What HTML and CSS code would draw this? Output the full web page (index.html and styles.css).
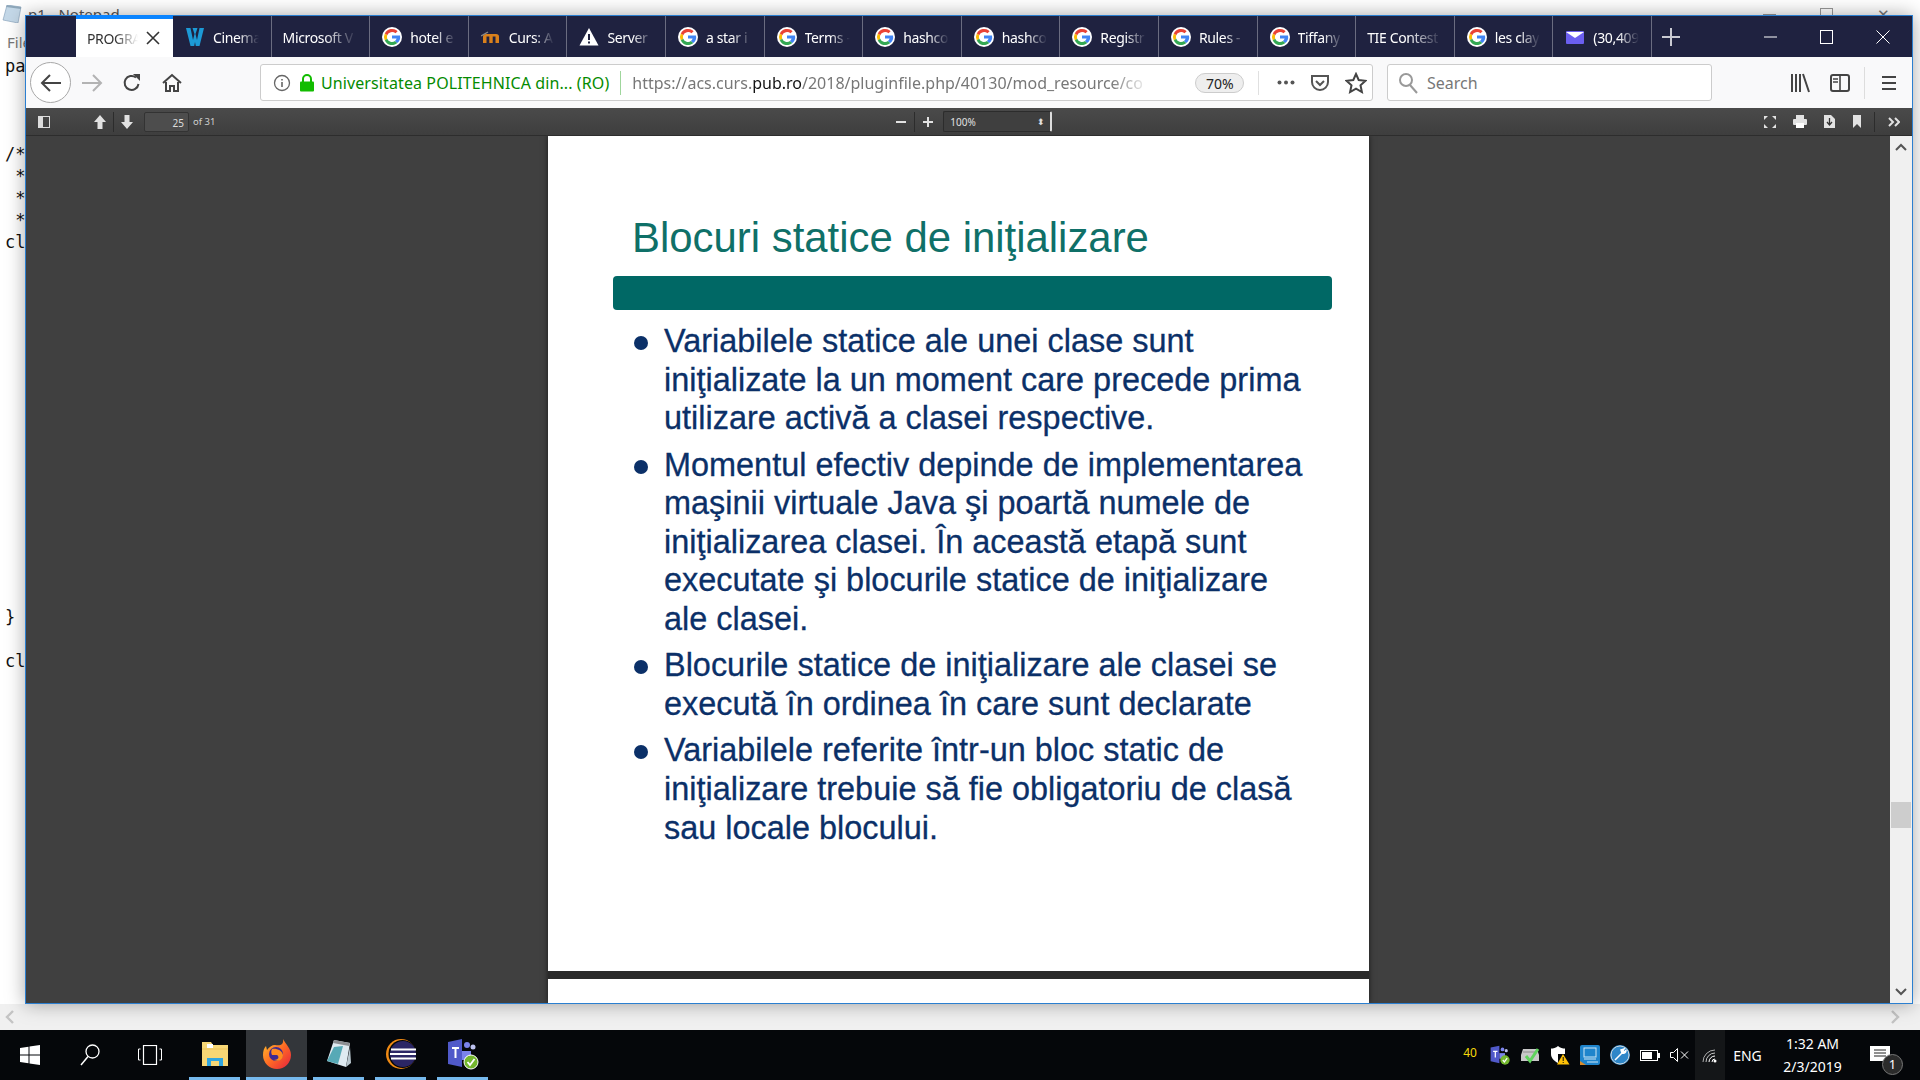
FILE: index.html
```html
<!DOCTYPE html>
<html lang="en">
<head>
  <meta charset="UTF-8" />
  <meta name="viewport" content="width=device-width, initial-scale=1.0" />
  <title>Blocuri statice de inițializare</title>
  <link rel="stylesheet" href="styles.css">
</head>
<body>
  <svg class="defs" width="0" height="0">
    <symbol id="g" viewBox="0 0 20 20">
      <circle cx="10" cy="10" r="10" fill="#fff"/>
      <path d="M5.2 8.3A5.2 5.2 0 0 1 13.5 6.3L15.6 4.2A8 8 0 0 0 2.8 6.4Z" fill="#ea4335"/>
      <path d="M2.8 6.4A8 8 0 0 0 2.8 13.6L5.2 11.7A5.2 5.2 0 0 1 5.2 8.3Z" fill="#fbbc05"/>
      <path d="M2.8 13.6A8 8 0 0 0 15.4 16L13 13.9A5.2 5.2 0 0 1 5.2 11.7Z" fill="#34a853"/>
      <path d="M18 8.4H10V11.6H14.6A4 4 0 0 1 13 13.9L15.4 16A8 8 0 0 0 18 8.4Z" fill="#4285f4"/>
    </symbol>
  </svg>

  <!-- notepad behind the browser -->
  <div class="notepad">
    <div class="np-title">
      <svg class="np-icon" width="20" height="18" viewBox="0 0 20 18"><path d="M5 0L19 2L16 18L1 15Z" fill="#c4d8e8" stroke="#7d9bb5" stroke-width=".6"/><path d="M5 0L19 2V4L4 2Z" fill="#8fa8bb"/></svg>
      <span>p1 - Notepad</span>
    </div>
    <div class="np-menu">File</div>
    <pre class="np-text">pa



/*
 *
 *
 *
cl
















}

cl</pre>
    <div class="np-controls"><span class="np-min"></span><span class="np-max"></span><span class="np-close">✕</span></div>
    <div class="np-hscroll">
      <svg width="10" height="14" viewBox="0 0 10 14"><path d="M8 1L2 7L8 13" fill="none" stroke="#c4c4c4" stroke-width="2.4"/></svg>
      <svg width="10" height="14" viewBox="0 0 10 14"><path d="M2 1L8 7L2 13" fill="none" stroke="#c4c4c4" stroke-width="2.4"/></svg>
    </div>
  </div>

  <div class="browser">
    <div class="tabbar">
      <div class="tab active"><span class="tab-text">PROGRA</span>
        <svg class="tab-x" width="14" height="14" viewBox="0 0 14 14"><path d="M1 1L13 13M13 1L1 13" stroke="#333" stroke-width="1.6"/></svg>
      </div>
      <div class="tab"><svg class="fav" viewBox="0 0 20 20"><path d="M1 1H5.500L8 13L9.500 7L7.500 1H12.500L10.500 7L12 13L14.500 1H19L14.500 19H10.800L10 15L9.200 19H5.500Z" fill="#1c9ad6"/></svg><span class="tab-text">Cinema</span></div>
      <div class="tab plain"><span class="tab-text">Microsoft V</span></div>
      <div class="tab"><svg class="fav"><use href="#g"/></svg><span class="tab-text">hotel e</span></div>
      <div class="tab"><svg class="fav" viewBox="0 0 20 20"><path d="M2 16V9.500Q2 7 5 7H15Q18 7 18 9.500V16H14.500V9.500H11.700V16H8.300V9.500H5.500V16Z" fill="#d9801c"/><path d="M0 9L7 5" stroke="#8a8a8a" stroke-width="1.400"/></svg><span class="tab-text">Curs: A</span></div>
      <div class="tab"><svg class="fav" viewBox="0 0 20 20"><path d="M10 1L19.500 18.500H.5Z" fill="#fff"/><path d="M9 7H11V13H9ZM9 14.500H11V16.500H9Z" fill="#1f2240"/></svg><span class="tab-text">Server</span></div>
      <div class="tab"><svg class="fav"><use href="#g"/></svg><span class="tab-text">a star i</span></div>
      <div class="tab"><svg class="fav"><use href="#g"/></svg><span class="tab-text">Terms -</span></div>
      <div class="tab"><svg class="fav"><use href="#g"/></svg><span class="tab-text">hashco</span></div>
      <div class="tab"><svg class="fav"><use href="#g"/></svg><span class="tab-text">hashco</span></div>
      <div class="tab"><svg class="fav"><use href="#g"/></svg><span class="tab-text">Registr</span></div>
      <div class="tab"><svg class="fav"><use href="#g"/></svg><span class="tab-text">Rules -</span></div>
      <div class="tab"><svg class="fav"><use href="#g"/></svg><span class="tab-text">Tiffany</span></div>
      <div class="tab plain"><span class="tab-text">TIE Contest</span></div>
      <div class="tab"><svg class="fav"><use href="#g"/></svg><span class="tab-text">les clay</span></div>
      <div class="tab"><svg class="fav" viewBox="0 0 20 20"><rect x="1" y="4" width="18" height="13" rx="1" fill="#6b5ff0"/><path d="M1 5L10 11L19 5" fill="#fff"/></svg><span class="tab-text">(30,409</span></div>
      <svg class="newtab" width="18" height="18" viewBox="0 0 18 18"><path d="M9 0V18M0 9H18" stroke="#c9cad2" stroke-width="2"/></svg>
      <div class="winctl">
        <svg width="14" height="14" viewBox="0 0 14 14"><path d="M0 7H13" stroke="#fff"/></svg>
        <svg width="14" height="14" viewBox="0 0 14 14"><rect x=".5" y=".5" width="12" height="13" fill="none" stroke="#fff"/></svg>
        <svg width="14" height="14" viewBox="0 0 14 14"><path d="M.5 .5L13.500 13.500M13.500 .5L.5 13.500" stroke="#fff"/></svg>
      </div>
    </div>

    <div class="navbar">
      <button class="nav-back"><svg width="22" height="20" viewBox="0 0 22 20"><path d="M10 2L2 10L10 18M2 10H21" fill="none" stroke="#444" stroke-width="2"/></svg></button>
      <button class="nav-btn"><svg width="22" height="20" viewBox="0 0 22 20"><path d="M12 2L20 10L12 18M20 10H1" fill="none" stroke="#b3b3b3" stroke-width="2"/></svg></button>
      <button class="nav-btn"><svg width="20" height="20" viewBox="0 0 20 20"><path d="M16.500 11A7 7 0 1 1 14 4.500" fill="none" stroke="#444" stroke-width="2"/><path d="M11 1H18V8Z" fill="#444"/></svg></button>
      <button class="nav-btn"><svg width="20" height="20" viewBox="0 0 20 20"><path d="M1 10L10 2L19 10M4 9V18H8V13H12V18H16V9" fill="none" stroke="#444" stroke-width="2"/></svg></button>

      <div class="urlbar">
        <svg class="url-info" width="18" height="18" viewBox="0 0 18 18"><circle cx="9" cy="9" r="7.500" fill="none" stroke="#666" stroke-width="1.300"/><path d="M9 8V13M9 5V6.500" stroke="#666" stroke-width="1.600"/></svg>
        <svg class="url-lock" width="16" height="18" viewBox="0 0 16 18"><path d="M4 8V5A4 4 0 0 1 12 5V8" fill="none" stroke="#12bc00" stroke-width="2"/><rect x="1" y="7.500" width="14" height="10" rx="1" fill="#12bc00"/></svg>
        <span class="url-org">Universitatea POLITEHNICA din... (RO)</span>
        <span class="url-sep"></span>
        <span class="url-text">https://acs.curs.<b>pub.ro</b>/2018/pluginfile.php/40130/mod_resource/co</span>
        <span class="url-zoom">70%</span>
        <span class="url-sep light"></span>
        <svg class="url-dots" width="18" height="5" viewBox="0 0 18 5"><circle cx="2.500" cy="2.500" r="2" fill="#555"/><circle cx="9" cy="2.500" r="2" fill="#555"/><circle cx="15.500" cy="2.500" r="2" fill="#555"/></svg>
        <svg class="url-icon" width="20" height="20" viewBox="0 0 20 20"><path d="M2 3H18V9A8 8 0 0 1 2 9Z" fill="none" stroke="#555" stroke-width="2"/><path d="M6 8L10 12L14 8" fill="none" stroke="#555" stroke-width="2"/></svg>
        <svg class="url-icon" width="22" height="22" viewBox="0 0 22 22"><path d="M11 2L13.700 8L20.500 8.800L15.500 13.300L16.900 20L11 16.600L5.100 20L6.500 13.300L1.500 8.800L8.300 8Z" fill="none" stroke="#444" stroke-width="2"/></svg>
      </div>

      <div class="searchbar">
        <svg width="20" height="22" viewBox="0 0 20 22"><circle cx="8" cy="8" r="6" fill="none" stroke="#999" stroke-width="2"/><path d="M12 13L19 21" stroke="#999" stroke-width="2"/></svg>
        <span>Search</span>
      </div>

      <div class="nav-right">
        <button class="nav-btn"><svg width="20" height="20" viewBox="0 0 20 20"><path d="M2 1V19M6 1V19M10 1V19M13 1L19 19" stroke="#444" stroke-width="2"/></svg></button>
        <button class="nav-btn"><svg width="20" height="20" viewBox="0 0 20 20"><rect x="1" y="2" width="18" height="16" rx="2" fill="none" stroke="#444" stroke-width="2"/><path d="M10 2V18M3 6H8M3 9H8" stroke="#444" stroke-width="1.600"/></svg></button>
        <span class="nav-sep"></span>
        <button class="nav-btn"><svg width="18" height="18" viewBox="0 0 18 18"><path d="M2 3H16M2 9H16M2 15H16" stroke="#444" stroke-width="2"/></svg></button>
      </div>
    </div>

    <div class="pdfbar">
      <svg class="pdf-sidebar" width="12" height="12" viewBox="0 0 12 12"><rect x=".5" y=".5" width="11" height="11" fill="none" stroke="#ddd"/><rect x="1" y="1" width="4" height="10" fill="#ddd"/></svg>
      <svg class="pdf-up" width="12" height="14" viewBox="0 0 12 14"><path d="M6 0L12 7H8.500V14H3.500V7H0Z" fill="#e2e2e2"/></svg>
      <span class="pdf-sep"></span>
      <svg width="12" height="14" viewBox="0 0 12 14"><path d="M6 14L12 7H8.500V0H3.500V7H0Z" fill="#e2e2e2"/></svg>
      <span class="pdf-page">25</span>
      <span class="pdf-of">of 31</span>
      <div class="pdf-zoom">
        <svg width="10" height="10" viewBox="0 0 10 10"><path d="M0 5H10" stroke="#e2e2e2" stroke-width="2"/></svg>
        <span class="pdf-sep"></span>
        <svg width="10" height="10" viewBox="0 0 10 10"><path d="M0 5H10M5 0V10" stroke="#e2e2e2" stroke-width="2"/></svg>
        <span class="pdf-select">100%<i>⬍</i></span>
      </div>
      <div class="pdf-right">
        <svg width="12" height="12" viewBox="0 0 12 12"><path d="M0 0H4L0 4ZM12 0V4L8 0ZM0 12V8L4 12ZM12 12H8L12 8Z" fill="#e2e2e2"/></svg>
        <svg width="14" height="13" viewBox="0 0 14 13"><rect x="3" y="0" width="8" height="4" fill="#e2e2e2"/><rect x="0" y="4" width="14" height="6" rx="1" fill="#e2e2e2"/><rect x="3" y="8" width="8" height="5" fill="#fff"/></svg>
        <svg width="11" height="13" viewBox="0 0 11 13"><path d="M0 0H7L11 4V13H0Z" fill="#e2e2e2"/><path d="M5.500 3V9M3 7L5.500 10L8 7" fill="none" stroke="#333" stroke-width="1.300"/></svg>
        <svg width="10" height="13" viewBox="0 0 10 13"><path d="M1 0H9V13L5 9L1 13Z" fill="#e2e2e2"/></svg>
        <span class="pdf-sep"></span>
        <svg width="12" height="10" viewBox="0 0 12 10"><path d="M1 1L5 5L1 9M7 1L11 5L7 9" fill="none" stroke="#e2e2e2" stroke-width="2"/></svg>
      </div>
    </div>

    <div class="viewer">
      <div class="doc">
        <div class="page">
          <h1 class="slide-title">Blocuri statice de iniţializare</h1>
          <div class="slide-bar"></div>
          <ul class="slide-list">
            <li>Variabilele statice ale unei clase sunt<br>iniţializate la un moment care precede prima<br>utilizare activă a clasei respective.</li>
            <li>Momentul efectiv depinde de implementarea<br>maşinii virtuale Java şi poartă numele de<br>iniţializarea clasei. În această etapă sunt<br>executate şi blocurile statice de iniţializare<br>ale clasei.</li>
            <li>Blocurile statice de iniţializare ale clasei se<br>execută în ordinea în care sunt declarate</li>
            <li>Variabilele referite într-un bloc static de<br>iniţializare trebuie să fie obligatoriu de clasă<br>sau locale blocului.</li>
          </ul>
        </div>
        <div class="page"></div>
      </div>
      <div class="vscroll">
        <svg width="12" height="8" viewBox="0 0 12 8"><path d="M1 7L6 2L11 7" fill="none" stroke="#555" stroke-width="2"/></svg>
        <span class="vthumb"></span>
        <svg width="12" height="8" viewBox="0 0 12 8"><path d="M1 1L6 6L11 1" fill="none" stroke="#555" stroke-width="2"/></svg>
      </div>
    </div>
  </div>

  <div class="taskbar">
    <div class="task-btn"><svg width="20" height="20" viewBox="0 0 20 20"><path d="M0 3L8.500 1.800V9.500H0ZM9.500 1.600L20 0V9.500H9.500ZM0 10.500H8.500V18.200L0 17ZM9.500 10.500H20V20L9.500 18.400Z" fill="#fff"/></svg></div>
    <div class="task-btn"><svg width="20" height="22" viewBox="0 0 20 22"><circle cx="12.500" cy="7.500" r="6.500" fill="none" stroke="#fff" stroke-width="1.300"/><path d="M8 12.500L1 21" stroke="#fff" stroke-width="1.500"/></svg></div>
    <div class="task-btn"><svg width="24" height="20" viewBox="0 0 24 20"><rect x="5.500" y=".5" width="13" height="19" fill="none" stroke="#fff" stroke-width="1.200"/><path d="M2.500 4H.5V15H2.500M21.500 4H23.500V15H21.500" fill="none" stroke="#fff"/></svg></div>
    <div class="task-apps">
      <div class="task-app"><svg width="28" height="26" viewBox="0 0 28 26"><path d="M1 1H10L12 4H27V25H1Z" fill="#f8d775"/><path d="M1 8H27" stroke="#eec25b"/><path d="M6 3H12V7H6Z" fill="#fff"/><path d="M6 25V17H22V25H18V20H10V25Z" fill="#31a6e0"/></svg></div>
      <div class="task-app on"><svg width="28" height="30" viewBox="0 0 28 30"><defs><linearGradient id="fx" x1="0" y1="0" x2="1" y2="1"><stop offset="0" stop-color="#ffc62e"/><stop offset=".5" stop-color="#ff6a24"/><stop offset="1" stop-color="#e3203f"/></linearGradient></defs><path d="M20 0C23 6 28 9 28 16A14 14 0 0 1 0 16C0 12 1 9 3 7L4 11C6 8 9 6 12 6C17 7 21 6 20 0Z" fill="url(#fx)"/><circle cx="13" cy="15" r="7" fill="#3f2a91"/><path d="M9 10C13 9 19 11 20 16C20 21 15 23 11 21C15 21 17 18 14 16H9C8 14 8 12 9 10Z" fill="#ff8b20"/></svg></div>
      <div class="task-app"><svg width="26" height="30" viewBox="0 0 26 30"><path d="M8 1L24 4L20 28L1 22Z" fill="#dfeaf1"/><path d="M8 8L1 22L12 25L17 7Z" fill="#57a9b6"/><path d="M8 1L24 4L23 7L7 4Z" fill="#8d8f93"/><path d="M20 28L24 8L25 24Z" fill="#b9c7cf"/></svg></div>
      <div class="task-app"><svg width="30" height="30" viewBox="0 0 30 30"><circle cx="15" cy="15" r="15" fill="#f08a14"/><circle cx="16.500" cy="15" r="14" fill="#05070a"/><circle cx="17" cy="15" r="13" fill="#2b2665"/><path d="M5 10.500H30M4 15H30M5 19.500H30" stroke="#fff" stroke-width="2"/></svg></div>
      <div class="task-app"><svg width="32" height="32" viewBox="0 0 32 32"><path d="M1 4L15 1V29L1 26Z" fill="#5059c9"/><path d="M5 9H12V11H9.500V20H7.500V11H5Z" fill="#fff"/><circle cx="20" cy="7" r="3" fill="#7b83eb"/><circle cx="26" cy="9" r="2.500" fill="#bec2f0"/><rect x="15" y="13" width="9" height="9" fill="#7b83eb"/><circle cx="24" cy="24" r="7" fill="#74b72e" stroke="#fff"/><path d="M20.500 24L23 27L27.500 21" fill="none" stroke="#fff" stroke-width="1.800"/></svg></div>
    </div>

    <div class="tray">
      <span class="tray-item tray-num">40</span>
      <span class="tray-item"><svg width="20" height="20" viewBox="0 0 32 32"><path d="M1 4L15 1V29L1 26Z" fill="#5059c9"/><path d="M5 9H12V11H9.500V20H7.500V11H5Z" fill="#fff"/><circle cx="20" cy="7" r="3" fill="#7b83eb"/><circle cx="26" cy="9" r="2.500" fill="#bec2f0"/><rect x="15" y="13" width="9" height="9" fill="#7b83eb"/><circle cx="24" cy="24" r="7.500" fill="#74b72e"/><path d="M20.500 24L23 27L27.500 21" fill="none" stroke="#fff" stroke-width="2"/></svg></span>
      <span class="tray-item"><svg width="20" height="18" viewBox="0 0 20 18"><path d="M3 3H17L19 9V15H1V9Z" fill="#c8c8c8"/><path d="M3 6H17" stroke="#8a8a8a"/><path d="M6 10L10 15L18 3" fill="none" stroke="#5fd35c" stroke-width="3"/></svg></span>
      <span class="tray-item"><svg width="20" height="20" viewBox="0 0 20 20"><path d="M8 1C6 3 3 3.500 1 3.500V9C1 13 4 16 8 18Z" fill="#fff"/><path d="M8 1C10 3 13 3.500 15 3.500V9H8Z" fill="#fff"/><path d="M13 9L19.500 19.500H7Z" fill="#ffc107"/><path d="M12.700 12H13.700V16H12.700ZM12.700 17H13.700V18H12.700Z" fill="#111"/></svg></span>
      <span class="tray-item"><svg width="20" height="20" viewBox="0 0 20 20"><rect width="20" height="20" rx="2" fill="#1f84cc"/><rect x="4" y="3" width="12" height="9" fill="none" stroke="#cfe6f5"/><path d="M4 14H16M7 17H18" stroke="#cfe6f5"/><path d="M0 16L6 20H0Z" fill="#d98b2b"/></svg></span>
      <span class="tray-item"><svg width="20" height="20" viewBox="0 0 20 20"><circle cx="10" cy="10" r="10" fill="#2e86c8"/><circle cx="10" cy="10" r="9" fill="none" stroke="#cfd7dd"/><path d="M5 15L12 8M12 8L11 5L14 4L13 6L15 7L16 5Q16 9 12 8" fill="#fff" stroke="#fff" stroke-width="1.500"/></svg></span>
      <span class="tray-item"><svg width="20" height="11" viewBox="0 0 20 11"><rect x=".5" y=".5" width="17" height="10" fill="none" stroke="#fff"/><rect x="2" y="2" width="10" height="7" fill="#fff"/><rect x="18" y="3" width="2" height="5" fill="#fff"/></svg></span>
      <span class="tray-item"><svg width="20" height="14" viewBox="0 0 20 14"><path d="M.5 4.500H3.500L7.500 .5V13.500L3.500 9.500H.5Z" fill="none" stroke="#fff"/><path d="M11 3.500L18 10.500M18 3.500L11 10.500" stroke="#fff"/></svg></span>
      <span class="tray-item tray-wifi"><svg width="16" height="16" viewBox="0 0 16 16"><circle cx="13" cy="14" r="1.500" fill="#fff"/><g fill="none" stroke="#fff"><path d="M1 15A12 12 0 0 1 13 3" opacity=".65"/><path d="M4 15A9 9 0 0 1 13 6" opacity=".75"/><path d="M7 15A6 6 0 0 1 13 9"/><path d="M10 15A3 3 0 0 1 13 12"/></g></svg></span>
      <span class="tray-lang">ENG</span>
      <div class="tray-clock"><span>1:32 AM</span><span>2/3/2019</span></div>
      <div class="tray-notif">
        <svg width="20" height="18" viewBox="0 0 20 18"><path d="M0 0H20V15H0Z" fill="#fff"/><path d="M4 4H16M4 7H16M4 10H16" stroke="#222"/></svg>
        <span class="notif-badge">1</span>
      </div>
    </div>
  </div>
</body>
</html>
```

FILE: styles.css
```css
* {
  box-sizing: border-box;
  padding: 0;
  margin: 0;
}

html, body {
  width: 1920px;
  height: 1080px;
  overflow: hidden;
}

body {
  position: relative;
  background: #fff;
  font-family: "Noto Sans", sans-serif;
  color: #222;
}

.defs {
  position: absolute;
}

button {
  border: none;
  background: transparent;
  display: flex;
  align-items: center;
  justify-content: center;
}

/* notepad */
.notepad {
  position: absolute;
  left: 0;
  top: 0;
  width: 1920px;
  height: 1030px;
  background: #fff;
  overflow: hidden;
}

.np-title {
  display: flex;
  align-items: flex-start;
  gap: 6px;
  height: 32px;
  padding-top: 5px;
  font-size: 15px;
  line-height: 18px;
  color: #555;
}

.np-icon {
  margin-left: 2px;
}

.np-menu {
  padding-left: 7px;
  font-size: 15px;
  color: #777;
  height: 23px;
}

.np-text {
  padding-left: 5px;
  font-family: "DejaVu Sans Mono", monospace;
  font-size: 17px;
  line-height: 22.05px;
  color: #111;
}

.np-controls {
  position: absolute;
  top: 4px;
  left: 1763px;
  display: flex;
  align-items: center;
  gap: 44px;
  color: #777;
  font-size: 15px;
}

.np-min {
  width: 13px;
  border-top: 1px solid #999;
}

.np-max {
  width: 13px;
  height: 12px;
  border: 1px solid #999;
}

.np-hscroll {
  position: absolute;
  left: 0;
  right: 0;
  bottom: 0;
  height: 26px;
  padding: 0 20px 0 5px;
  display: flex;
  align-items: center;
  justify-content: space-between;
  background: #f0f0f0;
}

/* browser window */
.browser {
  position: absolute;
  left: 25px;
  top: 15px;
  width: 1888px;
  height: 989px;
  display: flex;
  flex-direction: column;
  border: 1px solid #2b7fd0;
  box-shadow: 0 0 18px rgba(0, 0, 0, 0.35);
}

.tabbar {
  display: flex;
  height: 41px;
  padding-left: 50px;
  background: #1f2240;
  flex-shrink: 0;
}

.tab {
  display: flex;
  align-items: center;
  width: 98.6px;
  padding: 1px 12px 0 12px;
  gap: 8px;
  border-right: 1px solid #6a6c80;
  color: #fff;
  font-size: 14px;
  letter-spacing: -0.35px;
}

.tab.plain {
  padding-left: 11px;
}

.tab.active {
  width: 97px;
  padding: 0 13px 0 11px;
  margin-top: -1px;
  background: #fff;
  border-top: 4px solid #0a84ff;
  border-right: none;
  color: #333;
}

.tab-text {
  flex: 1;
  min-width: 0;
  overflow: hidden;
  white-space: nowrap;
  -webkit-mask-image: linear-gradient(to right, #000 55%, transparent 100%);
  mask-image: linear-gradient(to right, #000 55%, transparent 100%);
}

.tab-x {
  flex-shrink: 0;
}

.fav {
  width: 20px;
  height: 20px;
  flex-shrink: 0;
}

.newtab {
  margin: 12px 0 0 10px;
}

.winctl {
  margin-left: auto;
  display: flex;
  align-items: center;
  gap: 42px;
  padding: 0 22px 0 0;
}

.navbar {
  display: flex;
  align-items: center;
  height: 51px;
  padding-left: 4px;
  background: #f9f9fa;
  flex-shrink: 0;
}

.nav-back {
  width: 41px;
  height: 41px;
  margin-right: 1px;
  border: 1px solid #a8a8a8;
  border-radius: 50%;
  background: #fff;
}

.nav-btn {
  width: 40px;
  height: 40px;
}

.urlbar {
  display: flex;
  align-items: center;
  width: 1113px;
  height: 37px;
  margin-left: 68px;
  padding-left: 12px;
  background: #fff;
  border: 1px solid #ccc;
  border-radius: 3px;
  font-size: 16px;
  white-space: nowrap;
}

.url-lock {
  margin-left: 8px;
}

.url-org {
  margin-left: 6px;
  color: #058b00;
  letter-spacing: 0.1px;
}

.url-sep {
  width: 1px;
  height: 24px;
  margin: 0 11px;
  background: #9fd69c;
  flex-shrink: 0;
}

.url-sep.light {
  height: 24px;
  margin: 0 14px;
  background: #e0e0e0;
}

.url-text {
  width: 563px;
  overflow: hidden;
  color: #777;
  -webkit-mask-image: linear-gradient(to right, #000 85%, transparent 92%);
  mask-image: linear-gradient(to right, #000 85%, transparent 92%);
}

.url-text b {
  font-weight: 400;
  color: #111;
}

.url-zoom {
  width: 49px;
  height: 20px;
  line-height: 19px;
  text-align: center;
  font-size: 14px;
  background: #eee;
  border: 1px solid #ccc;
  border-radius: 10px;
  flex-shrink: 0;
}

.url-dots {
  margin-left: 4px;
}

.url-icon {
  margin-left: 15px;
}

.searchbar {
  display: flex;
  align-items: center;
  gap: 9px;
  width: 325px;
  height: 37px;
  margin-left: 14px;
  padding-left: 10px;
  background: #fff;
  border: 1px solid #ccc;
  border-radius: 3px;
  font-size: 16px;
  color: #777;
}

.nav-right {
  display: flex;
  align-items: center;
  margin-left: 68px;
}

.nav-sep {
  width: 1px;
  height: 32px;
  margin: 0 4px;
  background: #ddd;
}

/* pdf.js toolbar */
.pdfbar {
  display: flex;
  align-items: center;
  height: 28px;
  padding-left: 12px;
  background: linear-gradient(#4a4a4a, #3e3e3e);
  border-bottom: 1px solid #2d2d2d;
  flex-shrink: 0;
}

.pdfbar svg {
  flex-shrink: 0;
}

.pdf-up {
  margin-left: 44px;
}

.pdf-sep {
  width: 1px;
  height: 20px;
  background: #2c2c2c;
  margin: 0 7px;
}

.pdf-page {
  width: 45px;
  height: 20px;
  margin-left: 11px;
  padding-right: 4px;
  line-height: 20px;
  text-align: right;
  font-size: 10px;
  color: #ddd;
  background: #4d4d4d;
  border: 1px solid #333;
  border-radius: 2px;
}

.pdf-of {
  margin-left: 4px;
  font-size: 9.5px;
  color: #d0d0d0;
}

.pdf-zoom {
  display: flex;
  align-items: center;
  margin-left: 681px;
}

.pdf-zoom .pdf-sep {
  margin: 0 8px;
}

.pdf-select {
  display: flex;
  align-items: center;
  justify-content: space-between;
  width: 109px;
  height: 21px;
  margin-left: 10px;
  padding: 0 5px 0 6px;
  font-size: 10px;
  color: #e0e0e0;
  background: #3f3f3f;
  border: 1px solid #2c2c2c;
  border-right: 2px solid #ddd;
  border-radius: 2px;
}

.pdf-select i {
  font-style: normal;
  font-size: 9px;
}

.pdf-right {
  display: flex;
  align-items: center;
  gap: 17px;
  margin-left: auto;
  padding-right: 12px;
}

.pdf-right .pdf-sep {
  margin: 0 -4px 0 -5px;
}

/* pdf viewer */
.viewer {
  flex: 1;
  min-height: 0;
  display: flex;
  overflow: hidden;
  background: #404040;
}

.doc {
  width: 821px;
  margin-left: 522px;
  display: flex;
  flex-direction: column;
  gap: 8px;
  background: #2a2a2a;
  box-shadow: 0 0 6px rgba(0, 0, 0, 0.6);
}

.page {
  background: #fff;
  height: 835px;
  flex-shrink: 0;
  overflow: hidden;
}

.slide-title {
  padding: 72px 0 0 84px;
  font-family: "Liberation Sans", sans-serif;
  font-size: 41.9px;
  font-weight: 400;
  line-height: 60px;
  color: #0f7068;
}

.slide-bar {
  height: 34px;
  margin: 8px 37px 0 65px;
  background: #006865;
  border-radius: 4px;
}

.slide-list {
  list-style: none;
  margin: 12px 0 0 116px;
  font-family: "Liberation Sans", sans-serif;
  font-size: 32.45px;
  line-height: 38.6px;
  color: #0b3068;
  -webkit-text-stroke: 0.3px #0b3068;
}

.slide-list li {
  position: relative;
  margin-bottom: 7.8px;
  white-space: nowrap;
}

.slide-list li::before {
  content: "";
  position: absolute;
  left: -30px;
  top: 14px;
  width: 14px;
  height: 14px;
  border-radius: 50%;
  background: #0b3068;
}

.vscroll {
  width: 22px;
  margin-left: auto;
  display: flex;
  flex-direction: column;
  align-items: center;
  justify-content: space-between;
  padding: 7px 0;
  background: #f0f0f0;
}

.vthumb {
  width: 20px;
  height: 26px;
  margin-top: 490px;
  background: #cdcdcd;
}

/* windows taskbar */
.taskbar {
  position: absolute;
  left: 0;
  right: 0;
  bottom: 0;
  height: 50px;
  display: flex;
  background: #05070a;
  color: #fff;
}

.task-btn {
  width: 60px;
  display: flex;
  align-items: center;
  justify-content: center;
}

.task-apps {
  display: flex;
  margin-left: 4px;
}

.task-app {
  width: 51px;
  margin: 0 6px 0 5px;
  display: flex;
  align-items: center;
  justify-content: center;
  border-bottom: 3px solid #76b9ed;
}

.task-app.on {
  width: 61px;
  margin: 0 1px 0 0;
  background: #33363a;
}

.tray {
  display: flex;
  align-items: stretch;
  margin-left: auto;
  padding-right: 15px;
}

.tray-item {
  width: 30px;
  display: flex;
  align-items: center;
  justify-content: center;
}

.tray-num {
  font-size: 12px;
  color: #f5d90a;
  padding-bottom: 5px;
}

.tray-wifi {
  background: #141618;
}

.tray-lang {
  width: 45px;
  display: flex;
  align-items: center;
  justify-content: center;
  font-size: 14px;
}

.tray-clock {
  width: 85px;
  display: flex;
  flex-direction: column;
  align-items: center;
  justify-content: center;
  gap: 4px;
  font-size: 14px;
  line-height: 19px;
}

.tray-notif {
  position: relative;
  width: 50px;
  display: flex;
  align-items: center;
  justify-content: center;
}

.notif-badge {
  position: absolute;
  left: 27px;
  top: 24px;
  width: 21px;
  height: 21px;
  line-height: 19px;
  text-align: center;
  font-size: 13px;
  background: #2b2b2b;
  border: 1px solid #777;
  border-radius: 50%;
}
```
